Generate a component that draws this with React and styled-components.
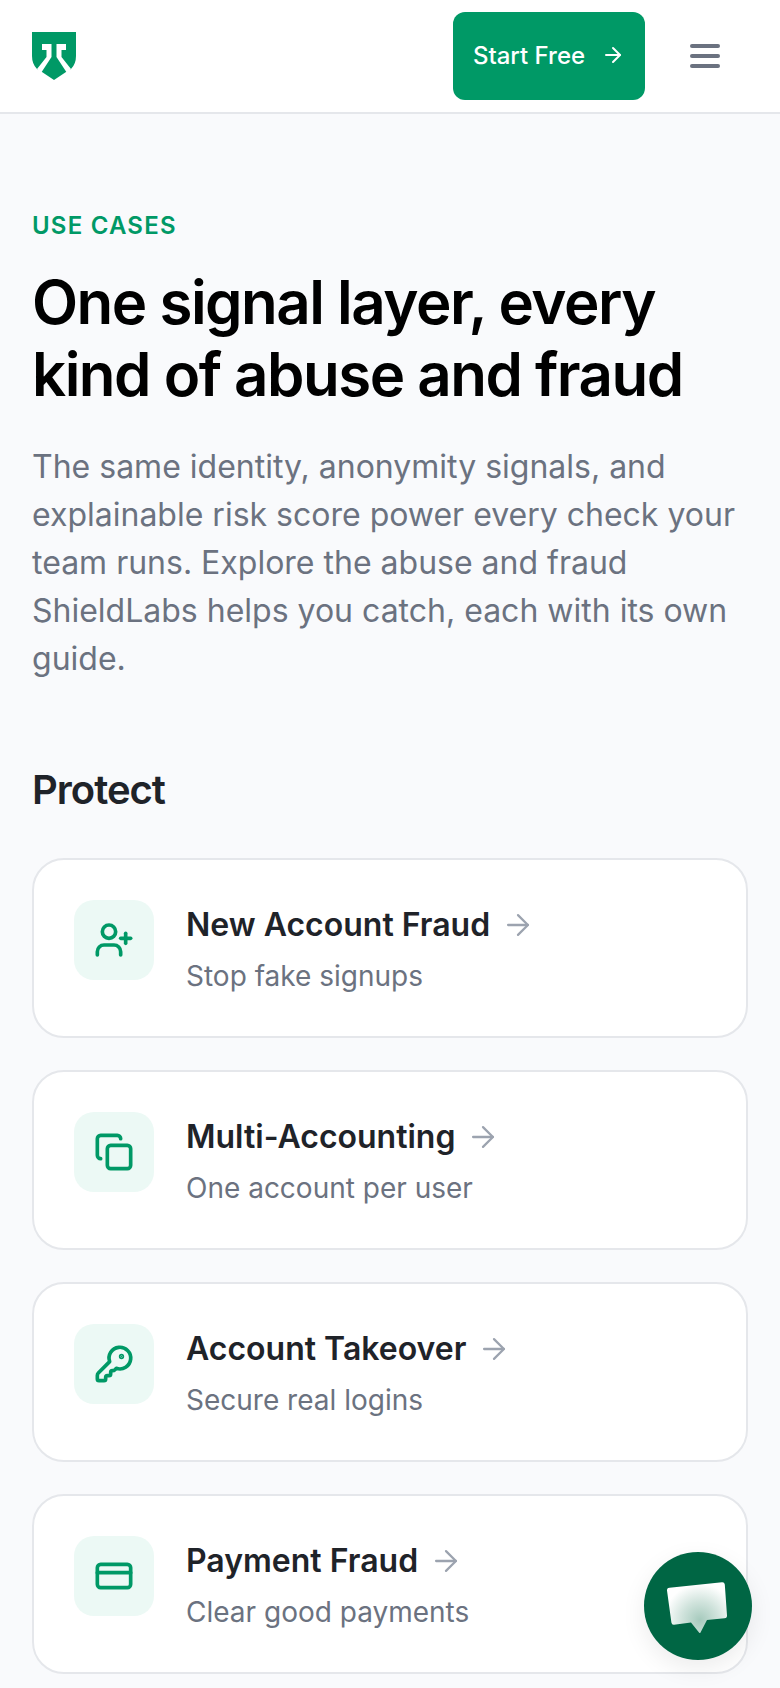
import React from "react";
import styled, { createGlobalStyle } from "styled-components";
import { ArrowRight, UserPlus, Copy, KeyRound, CreditCard } from "lucide-react";

const GlobalStyle = createGlobalStyle`
  html, body {
    margin: 0;
    padding: 0;
    background: #f9fafc;
    font-family: Inter, "Liberation Sans", sans-serif;
  }
  * {
    box-sizing: border-box;
  }
`;

const Page = styled.div`
  width: 780px;
  height: 1688px;
  overflow: hidden;
  position: relative;
`;

const Header = styled.header`
  display: flex;
  align-items: center;
  justify-content: space-between;
  height: 114px;
  padding: 0 60px 0 32px;
  background: #fff;
  border-bottom: 2px solid #e5e7eb;
`;

const Logo = styled.svg`
  width: 44px;
  height: 48px;
  display: block;
`;

const HeaderRight = styled.div`
  display: flex;
  align-items: center;
  gap: 45px;
`;

const StartButton = styled.a`
  display: flex;
  align-items: center;
  justify-content: center;
  gap: 16px;
  width: 192px;
  height: 88px;
  padding-bottom: 2px;
  border-radius: 12px;
  background: #009966;
  color: #fff;
  font-size: 24px;
  font-weight: 500;
`;

const Burger = styled.div`
  display: flex;
  flex-direction: column;
  gap: 6px;
  width: 30px;

  span {
    height: 4px;
    border-radius: 2px;
    background: #6b7280;
  }
`;

const Main = styled.main`
  padding: 0 32px;
`;

const Eyebrow = styled.div`
  margin-top: 97px;
  font-size: 24px;
  line-height: 30px;
  font-weight: 600;
  letter-spacing: 0.05em;
  color: #009966;
`;

const Title = styled.h1`
  margin: 25px 0 0;
  font-size: 60px;
  line-height: 72px;
  font-weight: 600;
  letter-spacing: -0.025em;
  color: #000;
`;

const Lead = styled.p`
  margin: 33px 0 0;
  font-size: 32px;
  line-height: 48px;
  color: #6b7280;
`;

const SectionTitle = styled.h2`
  margin: 79px 0 0;
  font-size: 40px;
  line-height: 56px;
  font-weight: 600;
  letter-spacing: -0.025em;
  color: #1f2329;
`;

const CardList = styled.div`
  display: flex;
  flex-direction: column;
  gap: 32px;
  margin-top: 40px;
`;

const Card = styled.a`
  display: flex;
  align-items: flex-start;
  gap: 32px;
  height: 180px;
  padding: 40px 40px;
  background: #fff;
  border: 2px solid #e5e7eb;
  border-radius: 32px;
`;

const IconBox = styled.div`
  display: flex;
  align-items: center;
  justify-content: center;
  flex: none;
  width: 80px;
  height: 80px;
  border-radius: 20px;
  background: #ecf9f5;
  color: #009966;
`;

const CardTitle = styled.div`
  display: flex;
  align-items: center;
  gap: 11px;
  margin-top: 3px;
  font-size: 32px;
  line-height: 44px;
  font-weight: 600;
  color: #1f2329;

  svg {
    color: #9ca3af;
  }
`;

const CardText = styled.div`
  margin-top: 9px;
  font-size: 28px;
  line-height: 40px;
  color: #6b7280;
`;

const ChatButton = styled.div`
  position: absolute;
  left: 644px;
  top: 1552px;
  display: flex;
  align-items: center;
  justify-content: center;
  width: 108px;
  height: 108px;
  border-radius: 50%;
  background: #006644;
  box-shadow: 0 8px 24px rgba(0, 0, 0, 0.08);
`;

const cases = [
  { title: "New Account Fraud", text: "Stop fake signups", Icon: UserPlus },
  { title: "Multi-Accounting", text: "One account per user", Icon: Copy },
  { title: "Account Takeover", text: "Secure real logins", Icon: KeyRound },
  { title: "Payment Fraud", text: "Clear good payments", Icon: CreditCard },
];

const App = () => (
  <Page>
    <GlobalStyle />
    <Header>
      <Logo viewBox="0 0 44 48">
        <path
          fill="#009966"
          d="M0 0H44V24Q44 32 39 37L34 40L22 48L10 40L5 37Q0 32 0 24Z"
        />
        <path
          fill="#fff"
          d="M10 12H19.500V25L9 41L5 37L14.500 25V18H10Z M34 12H24.500V25L35 41L39 37L29.500 25V18H34Z"
        />
      </Logo>
      <HeaderRight>
        <StartButton>
          Start Free
          <ArrowRight size={24} strokeWidth={2} />
        </StartButton>
        <Burger>
          <span />
          <span />
          <span />
        </Burger>
      </HeaderRight>
    </Header>
    <Main>
      <Eyebrow>USE CASES</Eyebrow>
      <Title>
        One signal layer, every
        <br />
        kind of abuse and fraud
      </Title>
      <Lead>
        The same identity, anonymity signals, and explainable risk score power
        every check your team runs. Explore the abuse and fraud ShieldLabs helps
        you catch, each with its own guide.
      </Lead>
      <SectionTitle>Protect</SectionTitle>
      <CardList>
        {cases.map(({ title, text, Icon }) => (
          <Card key={title}>
            <IconBox>
              <Icon size={40} strokeWidth={2.2} />
            </IconBox>
            <div>
              <CardTitle>
                {title}
                <ArrowRight size={34} strokeWidth={1.6} />
              </CardTitle>
              <CardText>{text}</CardText>
            </div>
          </Card>
        ))}
      </CardList>
    </Main>
    <ChatButton>
      <svg width="64" height="56" viewBox="0 0 64 56">
        <defs>
          <radialGradient
            id="bubble"
            gradientUnits="userSpaceOnUse"
            cx="34"
            cy="42"
            r="36"
          >
            <stop offset="0" stopColor="#a6cabd" />
            <stop offset="0.5" stopColor="#d0e3dc" />
            <stop offset="1" stopColor="#ffffff" />
          </radialGradient>
        </defs>
        <path
          fill="url(#bubble)"
          d="M3.500 9.700L56 4.200Q58.500 4 58.800 6.500L61 37.500Q61.200 40 58.500 40.300L41 42L34.500 54.500Q34 55.500 33 54.500L25 44.500L8 46.800Q5.700 47 5.400 44.500L1 12.500Q0.800 10 3.500 9.700Z"
        />
      </svg>
    </ChatButton>
  </Page>
);

export default App;
